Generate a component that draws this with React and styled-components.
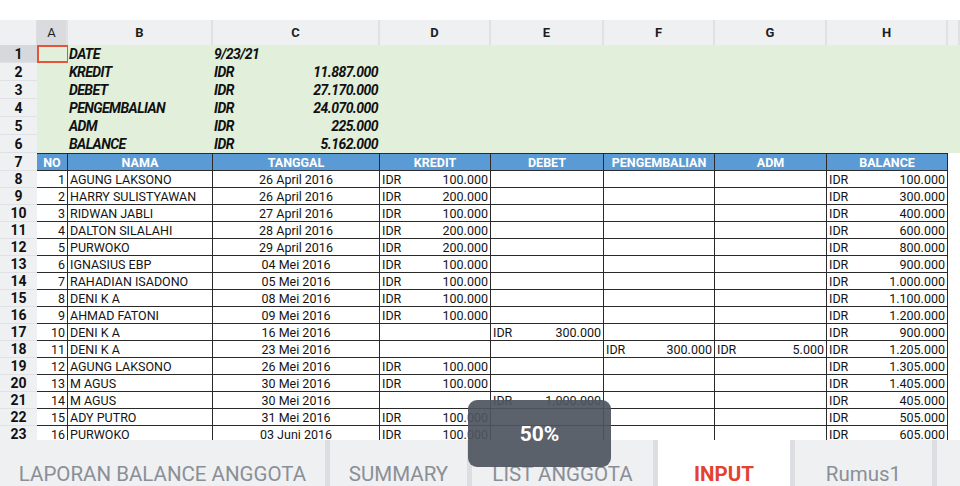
import React from "react";
import styled, { createGlobalStyle, css } from "styled-components";

const COLS = "37px 31px 145px 167px 111px 113px 111px 112px 121px 1fr";

const summary = [
  ["KREDIT", "11.887.000"],
  ["DEBET", "27.170.000"],
  ["PENGEMBALIAN", "24.070.000"],
  ["ADM", "225.000"],
  ["BALANCE", "5.162.000"],
];

const heads = ["NO", "NAMA", "TANGGAL", "KREDIT", "DEBET", "PENGEMBALIAN", "ADM", "BALANCE"];

// k = kredit, d = debet, p = pengembalian, a = adm, b = balance
const rows = [
  { nama: "AGUNG LAKSONO", tgl: "26 April 2016", k: "100.000", b: "100.000" },
  { nama: "HARRY SULISTYAWAN", tgl: "26 April 2016", k: "200.000", b: "300.000" },
  { nama: "RIDWAN JABLI", tgl: "27 April 2016", k: "100.000", b: "400.000" },
  { nama: "DALTON SILALAHI", tgl: "28 April 2016", k: "200.000", b: "600.000" },
  { nama: "PURWOKO", tgl: "29 April 2016", k: "200.000", b: "800.000" },
  { nama: "IGNASIUS EBP", tgl: "04 Mei 2016", k: "100.000", b: "900.000" },
  { nama: "RAHADIAN ISADONO", tgl: "05 Mei 2016", k: "100.000", b: "1.000.000" },
  { nama: "DENI K A", tgl: "08 Mei 2016", k: "100.000", b: "1.100.000" },
  { nama: "AHMAD FATONI", tgl: "09 Mei 2016", k: "100.000", b: "1.200.000" },
  { nama: "DENI K A", tgl: "16 Mei 2016", d: "300.000", b: "900.000" },
  { nama: "DENI K A", tgl: "23 Mei 2016", p: "300.000", a: "5.000", b: "1.205.000" },
  { nama: "AGUNG LAKSONO", tgl: "26 Mei 2016", k: "100.000", b: "1.305.000" },
  { nama: "M AGUS", tgl: "30 Mei 2016", k: "100.000", b: "1.405.000" },
  { nama: "M AGUS", tgl: "30 Mei 2016", d: "1.000.000", b: "405.000" },
  { nama: "ADY PUTRO", tgl: "31 Mei 2016", k: "100.000", b: "505.000" },
  { nama: "PURWOKO", tgl: "03 Juni 2016", k: "100.000", b: "605.000" },
];

const tabs = [
  { label: "LAPORAN BALANCE ANGGOTA", w: 325 },
  { label: "SUMMARY", w: 137 },
  { label: "LIST ANGGOTA", w: 181 },
  { label: "INPUT", w: 132, active: true },
  { label: "Rumus1", w: 137 },
  { label: "", w: 60 },
];

const GlobalStyle = createGlobalStyle`
  html, body {
    margin: 0;
    padding: 0;
    background: #fff;
  }
  body {
    font-family: Roboto, "Noto Sans", sans-serif;
    overflow: hidden;
  }
  * {
    box-sizing: border-box;
  }
`;

const Screen = styled.div`
  position: relative;
  width: 960px;
  height: 486px;
  overflow: hidden;
  display: flex;
  flex-direction: column;
  background: #fff;
`;

const TopGap = styled.div`
  height: 20px;
  flex: none;
`;

const Sheet = styled.div`
  flex: 1;
  min-height: 0;
  overflow: hidden;
  display: flex;
  flex-direction: column;
`;

const Row = styled.div`
  display: grid;
  grid-template-columns: ${COLS};
  height: ${(p) => p.$h}px;
  flex: none;
`;

const Corner = styled.div`
  background: #eef0f2;
  border-right: 1px solid #dcdee1;
`;

const ColHead = styled.div`
  display: flex;
  align-items: center;
  justify-content: center;
  background: ${(p) => (p.$sel ? "#d9dbde" : "#eef0f2")};
  border-right: 2px solid #dfe1e4;
  font-size: 13px;
  font-weight: ${(p) => (p.$sel ? 400 : 700)};
  color: #1e1e1e;
`;

const RowHead = styled.div`
  display: flex;
  align-items: center;
  justify-content: center;
  background: ${(p) => (p.$sel ? "#d6d8db" : "#eef0f2")};
  border-bottom: 1px solid #dfe1e4;
  font-size: 14px;
  font-weight: 700;
  color: #111;
`;

const Green = styled.div`
  position: relative;
  display: flex;
  align-items: center;
  justify-content: space-between;
  padding: 0 2px 0 1px;
  background: #e2efda;
  font-size: 14px;
  font-weight: 700;
  font-style: italic;
  letter-spacing: -0.55px;
  color: #111;
  white-space: nowrap;
  ${(p) =>
    p.$span &&
    css`
      grid-column: span ${p.$span};
    `}
`;

const Cursor = styled.div`
  position: absolute;
  inset: 0 -1px 0 0;
  border: 2px solid #e5533b;
`;

const HeadCell = styled.div`
  display: flex;
  align-items: center;
  justify-content: center;
  background: #5b9bd5;
  border-top: 1px solid #2a2a2a;
  border-bottom: 1px solid #2a2a2a;
  border-right: 1px solid #2a2a2a;
  font-size: 12.5px;
  font-weight: 700;
  color: #fff;
  white-space: nowrap;
`;

const Cell = styled.div`
  display: flex;
  align-items: center;
  justify-content: ${(p) => p.$align || "flex-start"};
  padding: 1px 2px 0;
  background: #fff;
  border-right: 1px solid #2a2a2a;
  border-bottom: 1px solid #2a2a2a;
  font-size: 12.5px;
  color: #141414;
  white-space: nowrap;
  overflow: hidden;
`;

const Money = styled(Cell)`
  justify-content: space-between;
`;

const Blank = styled.div`
  background: #fff;
`;

const TabBar = styled.div`
  height: 46px;
  flex: none;
  display: flex;
  gap: 5px;
  background: #dcdee1;
  overflow: hidden;
`;

const Tab = styled.div`
  flex: none;
  width: ${(p) => p.$w}px;
  padding-top: 22px;
  line-height: 24px;
  text-align: center;
  white-space: nowrap;
  background: ${(p) => (p.$active ? "#fff" : "#eff0f2")};
  color: ${(p) => (p.$active ? "#e2432f" : "#8a8f96")};
  font-size: 20.5px;
  font-weight: ${(p) => (p.$active ? 700 : 400)};
`;

const Toast = styled.div`
  position: absolute;
  left: 468px;
  top: 400px;
  width: 143px;
  height: 67px;
  border-radius: 9px;
  background: rgba(78, 85, 95, 0.92);
  display: flex;
  align-items: center;
  justify-content: center;
  color: #fff;
  font-size: 21px;
  font-weight: 700;
`;

const Amount = ({ v }) =>
  v ? (
    <Money>
      <span>IDR</span>
      <span>{v}</span>
    </Money>
  ) : (
    <Cell />
  );

const App = () => {
  return (
    <>
      <GlobalStyle />
      <Screen>
        <TopGap />
        <Sheet>
          <Row $h={25}>
            <Corner />
            {["A", "B", "C", "D", "E", "F", "G", "H", ""].map((c, i) => (
              <ColHead key={i} $sel={c === "A"}>
                {c}
              </ColHead>
            ))}
          </Row>

          <Row $h={18}>
            <RowHead $sel>1</RowHead>
            <Green>
              <Cursor />
            </Green>
            <Green>DATE</Green>
            <Green>9/23/21</Green>
            <Green $span={6} />
          </Row>
          {summary.map(([label, val], i) => (
            <Row $h={18} key={label}>
              <RowHead>{i + 2}</RowHead>
              <Green />
              <Green>{label}</Green>
              <Green>
                <span>IDR</span>
                <span>{val}</span>
              </Green>
              <Green $span={6} />
            </Row>
          ))}

          <Row $h={18}>
            <RowHead>7</RowHead>
            {heads.map((h) => (
              <HeadCell key={h}>{h}</HeadCell>
            ))}
            <Blank />
          </Row>

          {rows.map((r, i) => (
            <Row $h={17} key={i}>
              <RowHead>{i + 8}</RowHead>
              <Cell $align="flex-end">{i + 1}</Cell>
              <Cell>{r.nama}</Cell>
              <Cell $align="center">{r.tgl}</Cell>
              <Amount v={r.k} />
              <Amount v={r.d} />
              <Amount v={r.p} />
              <Amount v={r.a} />
              <Amount v={r.b} />
              <Blank />
            </Row>
          ))}
        </Sheet>

        <TabBar>
          {tabs.map((t, i) => (
            <Tab key={i} $w={t.w} $active={t.active}>
              {t.label}
            </Tab>
          ))}
        </TabBar>

        <Toast>50%</Toast>
      </Screen>
    </>
  );
};

export default App;
